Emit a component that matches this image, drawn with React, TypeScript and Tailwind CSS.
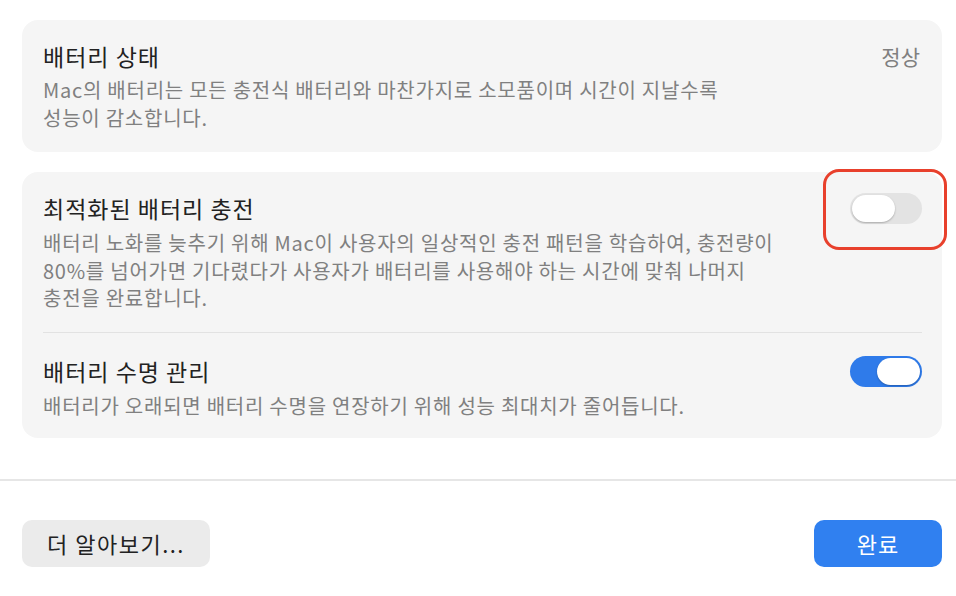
const font = { fontFamily: '"Noto Sans CJK KR", "Noto Sans", sans-serif' };

function Toggle({ on }: { on: boolean }) {
  return (
    <div
      className={`flex h-[31px] w-[72px] shrink-0 items-center rounded-full p-[2px] ${
        on ? 'justify-end bg-[#2f7bea]' : 'justify-start bg-[#e3e3e3]'
      }`}
    >
      <div className="h-[27px] w-[43px] rounded-full bg-white shadow-[0_1px_2px_rgba(0,0,0,0.25)]" />
    </div>
  );
}

export default function App() {
  return (
    <div className="flex h-[596px] w-[956px] flex-col bg-white text-[#222222]" style={font}>
      <div className="flex flex-col gap-5 pl-[22px] pr-[14px] pt-5">
        <div className="flex items-start justify-between rounded-2xl bg-[#f5f5f5] pl-[21px] pr-[22px] pt-[22px] pb-5">
          <div className="flex flex-col gap-[6px]">
            <div className="text-[23px] leading-[28px] tracking-[1px]">배터리 상태</div>
            <div className="text-[20px] leading-[28px] tracking-[0.75px] text-[#808080]">
              Mac의 배터리는 모든 충전식 배터리와 마찬가지로 소모품이며 시간이 지날수록
              <br />
              성능이 감소합니다.
            </div>
          </div>
          <div className="text-[21px] leading-[28px] text-[#808080]">정상</div>
        </div>

        <div className="flex flex-col rounded-2xl bg-[#f5f5f5] pl-[21px] pr-5">
          <div className="relative flex items-start justify-between pt-[22px] pb-5">
            <div className="flex flex-col gap-[7px]">
              <div className="text-[23px] leading-[28px] tracking-[1px]">최적화된 배터리 충전</div>
              <div className="text-[20px] leading-[27.5px] tracking-[0.75px] text-[#808080]">
                배터리 노화를 늦추기 위해 Mac이 사용자의 일상적인 충전 패턴을 학습하여, 충전량이
                <br />
                80%를 넘어가면 기다렸다가 사용자가 배터리를 사용해야 하는 시간에 맞춰 나머지
                <br />
                충전을 완료합니다.
              </div>
            </div>
            <div className="mt-[-1px]">
              <Toggle on={false} />
            </div>
            <div className="absolute right-[-25px] top-[-3px] h-[81px] w-[124px] rounded-[16px] border-[3px] border-[#e8402c]" />
          </div>
          <div className="h-px bg-[#e2e2e2]" />
          <div className="flex items-start justify-between pt-6 pb-[18px]">
            <div className="flex flex-col gap-[7px]">
              <div className="text-[23px] leading-[28px] tracking-[1px]">배터리 수명 관리</div>
              <div className="text-[20px] leading-[28px] tracking-[0.75px] text-[#808080]">
                배터리가 오래되면 배터리 수명을 연장하기 위해 성능 최대치가 줄어듭니다.
              </div>
            </div>
            <div className="mt-[-1px]">
              <Toggle on={true} />
            </div>
          </div>
        </div>
      </div>

      <div className="mt-[41px] h-[2px] bg-[#e6e6e6]" />

      <div className="flex items-center justify-between pl-[22px] pr-[14px] pt-[39px]">
        <button className="h-[47px] w-[188px] rounded-[10px] bg-[#ebebeb] text-[22px] tracking-[1.5px] text-[#222222]">
          더 알아보기...
        </button>
        <button className="h-[47px] w-[128px] rounded-[10px] bg-[#3080f0] text-[22px] tracking-[1px] text-white">
          완료
        </button>
      </div>
    </div>
  );
}
